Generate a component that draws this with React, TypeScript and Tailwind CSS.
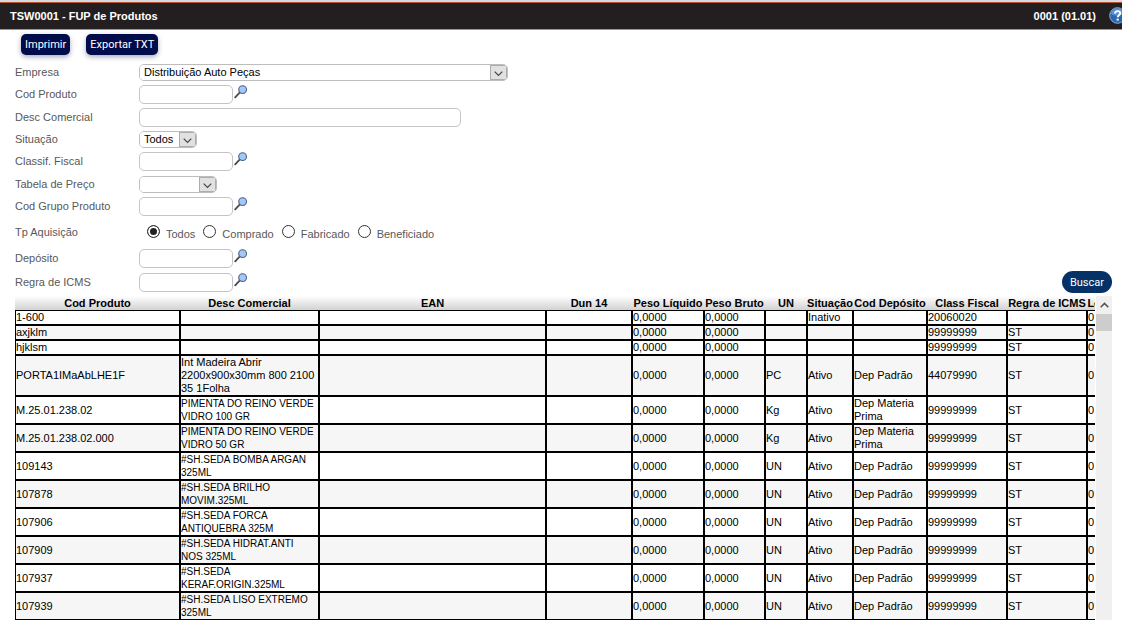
import type { ReactNode } from "react";
import clsx from "clsx";

// --- Data ---------------------------------------------------------------
const columns = [
  { label: "Cod Produto", width: "w-[165px]" },
  { label: "Desc Comercial", width: "w-[139px]" },
  { label: "EAN", width: "w-[227px]" },
  { label: "Dun 14", width: "w-[86px]" },
  { label: "Peso Líquido", width: "w-[72px]" },
  { label: "Peso Bruto", width: "w-[61px]" },
  { label: "UN", width: "w-[42px]" },
  { label: "Situação", width: "w-[46px]" },
  { label: "Cod Depósito", width: "w-[74px]" },
  { label: "Class Fiscal", width: "w-[80px]" },
  { label: "Regra de ICMS", width: "w-[80px]" },
  { label: "Lote", width: "w-[24px]" },
];

const rows = [
  ["1-600", "", "", "", "0,0000", "0,0000", "", "Inativo", "", "20060020", "", "0"],
  ["axjklm", "", "", "", "0,0000", "0,0000", "", "", "", "99999999", "ST", "0"],
  ["hjklsm", "", "", "", "0,0000", "0,0000", "", "", "", "99999999", "ST", "0"],
  ["PORTA1IMaAbLHE1F", "Int Madeira Abrir 2200x900x30mm 800 2100 35 1Folha", "", "", "0,0000", "0,0000", "PC", "Ativo", "Dep Padrão", "44079990", "ST", "0"],
  ["M.25.01.238.02", "PIMENTA DO REINO VERDE VIDRO 100 GR", "", "", "0,0000", "0,0000", "Kg", "Ativo", "Dep Materia Prima", "99999999", "ST", "0"],
  ["M.25.01.238.02.000", "PIMENTA DO REINO VERDE VIDRO 50 GR", "", "", "0,0000", "0,0000", "Kg", "Ativo", "Dep Materia Prima", "99999999", "ST", "0"],
  ["109143", "#SH.SEDA BOMBA ARGAN 325ML", "", "", "0,0000", "0,0000", "UN", "Ativo", "Dep Padrão", "99999999", "ST", "0"],
  ["107878", "#SH.SEDA BRILHO MOVIM.325ML", "", "", "0,0000", "0,0000", "UN", "Ativo", "Dep Padrão", "99999999", "ST", "0"],
  ["107906", "#SH.SEDA FORCA ANTIQUEBRA 325M", "", "", "0,0000", "0,0000", "UN", "Ativo", "Dep Padrão", "99999999", "ST", "0"],
  ["107909", "#SH.SEDA HIDRAT.ANTI NOS 325ML", "", "", "0,0000", "0,0000", "UN", "Ativo", "Dep Padrão", "99999999", "ST", "0"],
  ["107937", "#SH.SEDA KERAF.ORIGIN.325ML", "", "", "0,0000", "0,0000", "UN", "Ativo", "Dep Padrão", "99999999", "ST", "0"],
  ["107939", "#SH.SEDA LISO EXTREMO 325ML", "", "", "0,0000", "0,0000", "UN", "Ativo", "Dep Padrão", "99999999", "ST", "0"],
];

const isCaps = (text: string) => text !== "" && text === text.toUpperCase();

// --- Form pieces --------------------------------------------------------
interface FieldProps {
  id?: string;
  label: string;
  height: string;
  children: ReactNode;
}

function Field({ id, label, height, children }: FieldProps) {
  return (
    <div className={clsx("flex items-center", height)}>
      <label htmlFor={id} className="w-[124px] shrink-0 text-[#58585a]">
        {label}
      </label>
      {children}
    </div>
  );
}

function TextBox({ id, width }: { id: string; width: string }) {
  return (
    <input
      id={id}
      type="text"
      className={clsx("h-[19px] rounded-[5px] border border-[#c4c4c4] bg-white px-1 text-black outline-none", width)}
    />
  );
}

function Lookup({ id }: { id: string }) {
  return (
    <div className="flex items-start">
      <TextBox id={id} width="w-[94px]" />
      <button type="button" aria-label="Pesquisar" className="ml-px">
        <svg width="14" height="14" viewBox="0 0 14 14" fill="none">
          <path d="M1.2 12.4 5.6 7.6" stroke="#4d4a48" strokeWidth="1.8" strokeLinecap="round" />
          <circle cx="8.6" cy="4.6" r="3.9" fill="#a3c8f3" stroke="#48658c" strokeWidth="1.1" />
        </svg>
      </button>
    </div>
  );
}

function SelectBox({ id, width, options }: { id: string; width: string; options: string[] }) {
  return (
    <div className={clsx("flex h-[17px] overflow-hidden rounded-[5px] border border-[#bdbdbd]", width)}>
      <select id={id} className="min-w-0 flex-1 appearance-none bg-white pl-1 text-black outline-none">
        {options.map((option) => (
          <option key={option}>{option}</option>
        ))}
      </select>
      <span className="flex w-[17px] shrink-0 items-center justify-center border border-[#adadad] bg-[#e1e1e1] pt-1">
        <svg width="9" height="6" viewBox="0 0 9 6" fill="none" stroke="#444" strokeWidth="1.2">
          <path d="M.7.7 4.5 4.5 8.3.7" />
        </svg>
      </span>
    </div>
  );
}

function Radio({ label, checked }: { label: string; checked?: boolean }) {
  return (
    <label className="flex items-start gap-1.5 text-[#58585a]">
      <input
        type="radio"
        name="aquisicao"
        defaultChecked={checked}
        className="size-[13px] appearance-none rounded-full border border-[#333] bg-white checked:bg-[#222] checked:shadow-[inset_0_0_0_2px_white]"
      />
      <span className="pt-[3px]">{label}</span>
    </label>
  );
}

// --- Page ---------------------------------------------------------------
export default function App() {
  return (
    <div className="flex h-screen flex-col overflow-hidden bg-white font-['Liberation_Sans',Arial,sans-serif] text-[11px] leading-[13px] text-black">
      <header className="flex h-[30px] shrink-0 items-center justify-between overflow-hidden border-t-2 border-b border-t-[#d5dae3] border-b-[#9a9797] bg-[#231f20] pl-[10px] font-bold text-white shadow-[inset_0_1px_0_#b4532c]">
        <h1 className="pt-0.5">TSW0001 - FUP de Produtos</h1>
        <div className="-mr-1 flex items-center gap-[13px]">
          <span className="pt-0.5">0001 (01.01)</span>
          <button type="button" aria-label="Ajuda">
            <svg width="17" height="17" viewBox="0 0 17 17" fill="none">
              <circle cx="8.5" cy="8.5" r="7.8" fill="#2c68b2" stroke="#86aedb" strokeWidth="1" />
              <path d="M2 7a6.6 6.6 0 0 1 13 0c-4 2-9 2-13 0z" fill="#5c93d1" />
              <path d="M6 6.6c0-3.3 5.2-3.3 5.2-.3 0 2-2.5 2-2.5 4" stroke="#fff" strokeWidth="1.9" />
              <path d="M7.6 11.6h2.1v2H7.6z" fill="#fff" />
            </svg>
          </button>
        </div>
      </header>

      <div className="flex shrink-0 gap-4 px-[21px] pt-1 font-[Roboto,sans-serif] text-white">
        <button type="button" className="h-[21px] rounded-[5px] bg-[#010c4b] px-1 shadow-[0_2px_5px_rgba(1,12,75,0.35)]">
          Imprimir
        </button>
        <button type="button" className="h-[21px] rounded-[5px] bg-[#010c4b] px-1 shadow-[0_2px_5px_rgba(1,12,75,0.35)]">
          Exportar TXT
        </button>
      </div>

      <form className="shrink-0 pt-1.5 pr-[10px] pl-[15px]">
        <Field id="empresa" label="Empresa" height="h-[22px]">
          <SelectBox id="empresa" width="w-[369px]" options={["Distribuição Auto Peças"]} />
        </Field>
        <Field id="produto" label="Cod Produto" height="h-[23px]">
          <Lookup id="produto" />
        </Field>
        <Field id="desc" label="Desc Comercial" height="h-[22px]">
          <TextBox id="desc" width="w-[322px]" />
        </Field>
        <Field id="situacao" label="Situação" height="h-[22px]">
          <SelectBox id="situacao" width="w-[58px]" options={["Todos", "Ativo", "Inativo"]} />
        </Field>
        <Field id="classif" label="Classif. Fiscal" height="h-[23px]">
          <Lookup id="classif" />
        </Field>
        <Field id="tabela" label="Tabela de Preço" height="h-[22px]">
          <SelectBox id="tabela" width="w-[78px]" options={[""]} />
        </Field>
        <Field id="grupo" label="Cod Grupo Produto" height="h-[23px]">
          <Lookup id="grupo" />
        </Field>
        <fieldset className="flex h-7 items-center">
          <legend className="float-left w-[132px] text-[#58585a]">Tp Aquisição</legend>
          <div className="flex gap-2 pt-0.5">
            <Radio label="Todos" checked />
            <Radio label="Comprado" />
            <Radio label="Fabricado" />
            <Radio label="Beneficiado" />
          </div>
        </fieldset>
        <Field id="deposito" label="Depósito" height="h-6">
          <Lookup id="deposito" />
        </Field>
        <div className="flex items-center justify-between">
          <Field id="regra" label="Regra de ICMS" height="h-6">
            <Lookup id="regra" />
          </Field>
          <button type="button" className="h-[22px] rounded-full bg-[#053266] px-2 font-[Roboto,sans-serif] text-white">
            Buscar
          </button>
        </div>
      </form>

      <div className="flex min-h-0 flex-1 pt-0.5 pr-[10px] pl-[15px]">
        <div className="min-w-0 flex-1 overflow-hidden">
          <table className="w-[1096px] table-fixed border-separate border-spacing-0">
            <thead>
              <tr className="bg-linear-to-b from-white to-[#d2d2d2]">
                {columns.map((column) => (
                  <th key={column.label} className={clsx("h-[14px] p-0 text-center whitespace-nowrap", column.width)}>
                    {column.label}
                  </th>
                ))}
              </tr>
            </thead>
            <tbody>
              {rows.map((row) => (
                <tr key={row[0]} className="even:bg-[#f6f6f6]">
                  {row.map((cell, i) => (
                    <td key={i} className={clsx("h-[15px] border border-black p-0", i === 1 && isCaps(cell) && "text-[10px]")}>
                      {cell}
                    </td>
                  ))}
                </tr>
              ))}
            </tbody>
          </table>
        </div>
        <div className="ml-px w-4 shrink-0 bg-[#f0f0f0]">
          <button type="button" aria-label="Rolar para cima" className="flex h-[18px] w-full items-center justify-center">
            <svg width="9" height="6" viewBox="0 0 9 6" fill="none" stroke="#505050" strokeWidth="1.5">
              <path d="M.7 5.2 4.5 1.4 8.3 5.2" />
            </svg>
          </button>
          <div className="h-[17px] bg-[#cdcdcd]" />
        </div>
      </div>
    </div>
  );
}
